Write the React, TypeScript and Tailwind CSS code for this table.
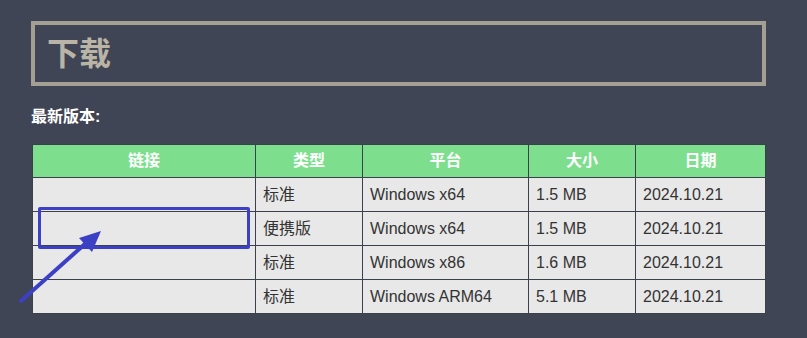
const rows = [
  { type: "标准", platform: "Windows x64", size: "1.5 MB", date: "2024.10.21" },
  { type: "便携版", platform: "Windows x64", size: "1.5 MB", date: "2024.10.21" },
  { type: "标准", platform: "Windows x86", size: "1.6 MB", date: "2024.10.21" },
  { type: "标准", platform: "Windows ARM64", size: "5.1 MB", date: "2024.10.21" },
];

function App() {
  const th = "border border-[#3b404d] font-bold text-white text-[16px] h-[33px] p-0 text-center";
  const td = "border border-[#3b404d] text-[#333333] text-[16px] h-[34px] py-0 pl-[7px] text-left";

  return (
    <div
      className="relative w-[807px] h-[338px] bg-[#3f4555] overflow-hidden pt-[21px] pl-[31px]"
      style={{ fontFamily: '"Liberation Sans", Arial, "Noto Sans CJK SC", sans-serif' }}
    >
      <div className="w-[735px] h-[65px] border-4 border-[#a39f92] flex items-center pl-[12px]">
        <h1 className="text-[32px] font-bold text-[#b9b4a6] leading-none">下载</h1>
      </div>

      <p className="mt-[21px] text-[16px] font-bold text-white leading-[20px]">最新版本:</p>

      <table className="mt-[17px] ml-[1px] border-collapse w-[733px] table-fixed">
        <colgroup>
          <col className="w-[223px]" />
          <col className="w-[107px]" />
          <col className="w-[166px]" />
          <col className="w-[107px]" />
          <col className="w-[130px]" />
        </colgroup>
        <thead>
          <tr className="bg-[#7ddf8e]">
            <th className={th}>链接</th>
            <th className={th}>类型</th>
            <th className={th}>平台</th>
            <th className={th}>大小</th>
            <th className={th}>日期</th>
          </tr>
        </thead>
        <tbody>
          {rows.map((r, i) => (
            <tr key={i} className="bg-[#e8e8e8]">
              <td className={td}></td>
              <td className={td}>{r.type}</td>
              <td className={td}>{r.platform}</td>
              <td className={td}>{r.size}</td>
              <td className={td}>{r.date}</td>
            </tr>
          ))}
        </tbody>
      </table>

      {/* annotation overlay */}
      <div className="absolute left-[38px] top-[207px] w-[212px] h-[42px] border-[3px] border-[#3b40c4] rounded-[2px]" />
      <svg className="absolute left-0 top-0" width="807" height="338" viewBox="0 0 807 338">
        <line x1="21" y1="301" x2="86" y2="243" stroke="#3b40c4" strokeWidth="4" strokeLinecap="round" />
        <polygon points="101,231 79,238 92,252" fill="#3b40c4" />
      </svg>
    </div>
  );
}

export default App;
